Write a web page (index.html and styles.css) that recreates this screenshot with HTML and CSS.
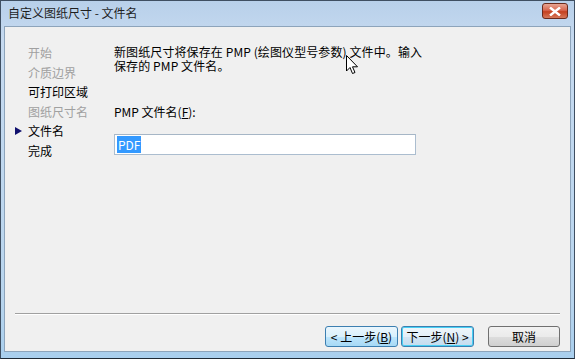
FILE: index.html
```html
<!DOCTYPE html>
<html lang="zh-CN">
<head>
    <meta charset="UTF-8">
    <title>自定义图纸尺寸 - 文件名</title>
    <link rel="stylesheet" href="styles.css">
</head>
<body>
    <div class="window">
        <div class="titlebar">
            <span class="title">自定义图纸尺寸 - 文件名</span>
            <span class="close">
                <svg width="12" height="9" viewBox="0 0 12 9"><path d="M1 0.5 L11 8.5 M11 0.5 L1 8.5" stroke="#fff" stroke-width="2.4"/></svg>
            </span>
        </div>
        <div class="client">
            <div class="content">
                <ul class="steps">
                    <li class="off">开始</li>
                    <li class="off">介质边界</li>
                    <li>可打印区域</li>
                    <li class="off">图纸尺寸名</li>
                    <li class="current">文件名</li>
                    <li>完成</li>
                </ul>
                <div class="main">
                    <p class="intro">新图纸尺寸将保存在 PMP (绘图仪型号参数) 文件中。输入<br>保存的 PMP 文件名。</p>
                    <label class="field-label" for="pmpName">PMP 文件名(<u>F</u>):</label>
                    <div class="input-box" id="pmpName"><span class="selected">PDF</span></div>
                </div>
            </div>
            <div class="footer">
                <div class="buttons">
                    <button class="btn hot">&lt; 上一步(<u>B</u>)</button>
                    <button class="btn focus">下一步(<u>N</u>) &gt;</button>
                    <button class="btn cancel">取消</button>
                </div>
            </div>
            <svg class="cursor" width="13" height="20" viewBox="0 0 13 20">
                <path d="M0.5 0.5 L0.5 16 L4 12.5 L6.5 18.5 L9 17.5 L6.5 11.8 L11.5 11.8 Z" fill="#fff" stroke="#000" stroke-width="1"/>
            </svg>
        </div>
    </div>
</body>
</html>
```

FILE: styles.css
```css
* {
    box-sizing: border-box;
    margin: 0;
    padding: 0;
}

body {
    width: 575px;
    height: 359px;
    overflow: hidden;
    font-family: "Noto Sans CJK SC", "DejaVu Sans", sans-serif;
    font-size: 12px;
    color: #000;
}

.window {
    width: 575px;
    height: 359px;
    border: 1px solid #3f4f62;
    border-bottom-color: #1f2a36;
    background: linear-gradient(to bottom, #b8d0ea 0, #c6daf0 40px, #b8d5ee 300px, #a9cfee 100%);
    display: flex;
    flex-direction: column;
    padding: 0 3px 6px 3px;
}

.titlebar {
    height: 25px;
    display: flex;
    align-items: center;
    justify-content: space-between;
    padding: 0 3px 1px 4px;
    flex-shrink: 0;
}

.title {
    color: #1e1e1e;
    font-size: 12px;
    line-height: 14px;
}

.close {
    width: 26px;
    height: 16px;
    margin-top: -4px;
    border: 1px solid #6b2a1c;
    border-radius: 3px;
    background: linear-gradient(to bottom, #e8a593 0, #d7664f 45%, #c4401f 55%, #d6785b 100%);
    display: flex;
    align-items: center;
    justify-content: center;
}

.client {
    flex: 1;
    position: relative;
    background: #f0f0f0;
    border: 1px solid #8da4bb;
    display: flex;
    flex-direction: column;
}

.content {
    flex: 1;
    display: flex;
}

.steps {
    list-style: none;
    width: 109px;
    padding: 18px 0 0 23px;
}

.steps li {
    height: 19.5px;
    line-height: 15px;
    font-size: 12px;
    position: relative;
}

.steps li.off {
    color: #a0a0a0;
}

.steps li.current::before {
    content: "";
    position: absolute;
    left: -13px;
    top: 4px;
    border-left: 7px solid #10106e;
    border-top: 4px solid transparent;
    border-bottom: 4px solid transparent;
}

.main {
    padding: 18px 0 0 0;
    display: flex;
    flex-direction: column;
}

.intro {
    font-size: 12px;
    line-height: 14px;
    letter-spacing: 0.1px;
}

.field-label {
    margin-top: 32px;
    line-height: 14px;
}

.input-box {
    margin-top: 15px;
    width: 302px;
    height: 21px;
    background: #fff;
    border: 1px solid #abbdcf;
    border-top-color: #a6b6c6;
    padding: 2px 0 0 2px;
    line-height: 15px;
}

.selected {
    background: #3399ff;
    color: #fff;
    padding: 0 1px;
}

.footer {
    height: 38px;
    margin: 0 10px 0 10px;
    border-top: 1px solid #a0a0a0;
    box-shadow: inset 0 1px 0 #fff;
    display: flex;
    justify-content: flex-end;
    padding-top: 12px;
}

.buttons {
    display: flex;
    gap: 3px;
    height: 21px;
}

.btn {
    width: 73px;
    height: 21px;
    font-family: "Noto Sans CJK SC", "DejaVu Sans", sans-serif;
    font-size: 12px;
    line-height: 17px;
    color: #000;
    border: 1px solid #707070;
    border-radius: 3px;
    background: linear-gradient(to bottom, #f2f2f2 0, #ebebeb 50%, #dddddd 51%, #cfcfcf 100%);
}

.btn u {
    text-decoration: underline;
}

.btn.hot {
    border-color: #3c7fb1;
    background: linear-gradient(to bottom, #eaf6fd 0, #d9f0fc 50%, #bee6fd 51%, #a7d9f5 100%);
}

.btn.focus {
    border-color: #3c7fb1;
    box-shadow: inset 0 0 0 1px #48d0f4;
    background: linear-gradient(to bottom, #eef6fb 0, #e3eff8 50%, #d2e5f3 51%, #c4dcef 100%);
}

.btn.cancel {
    margin-left: 11px;
    width: 72px;
}

.cursor {
    position: absolute;
    left: 341px;
    top: 28px;
}
```
